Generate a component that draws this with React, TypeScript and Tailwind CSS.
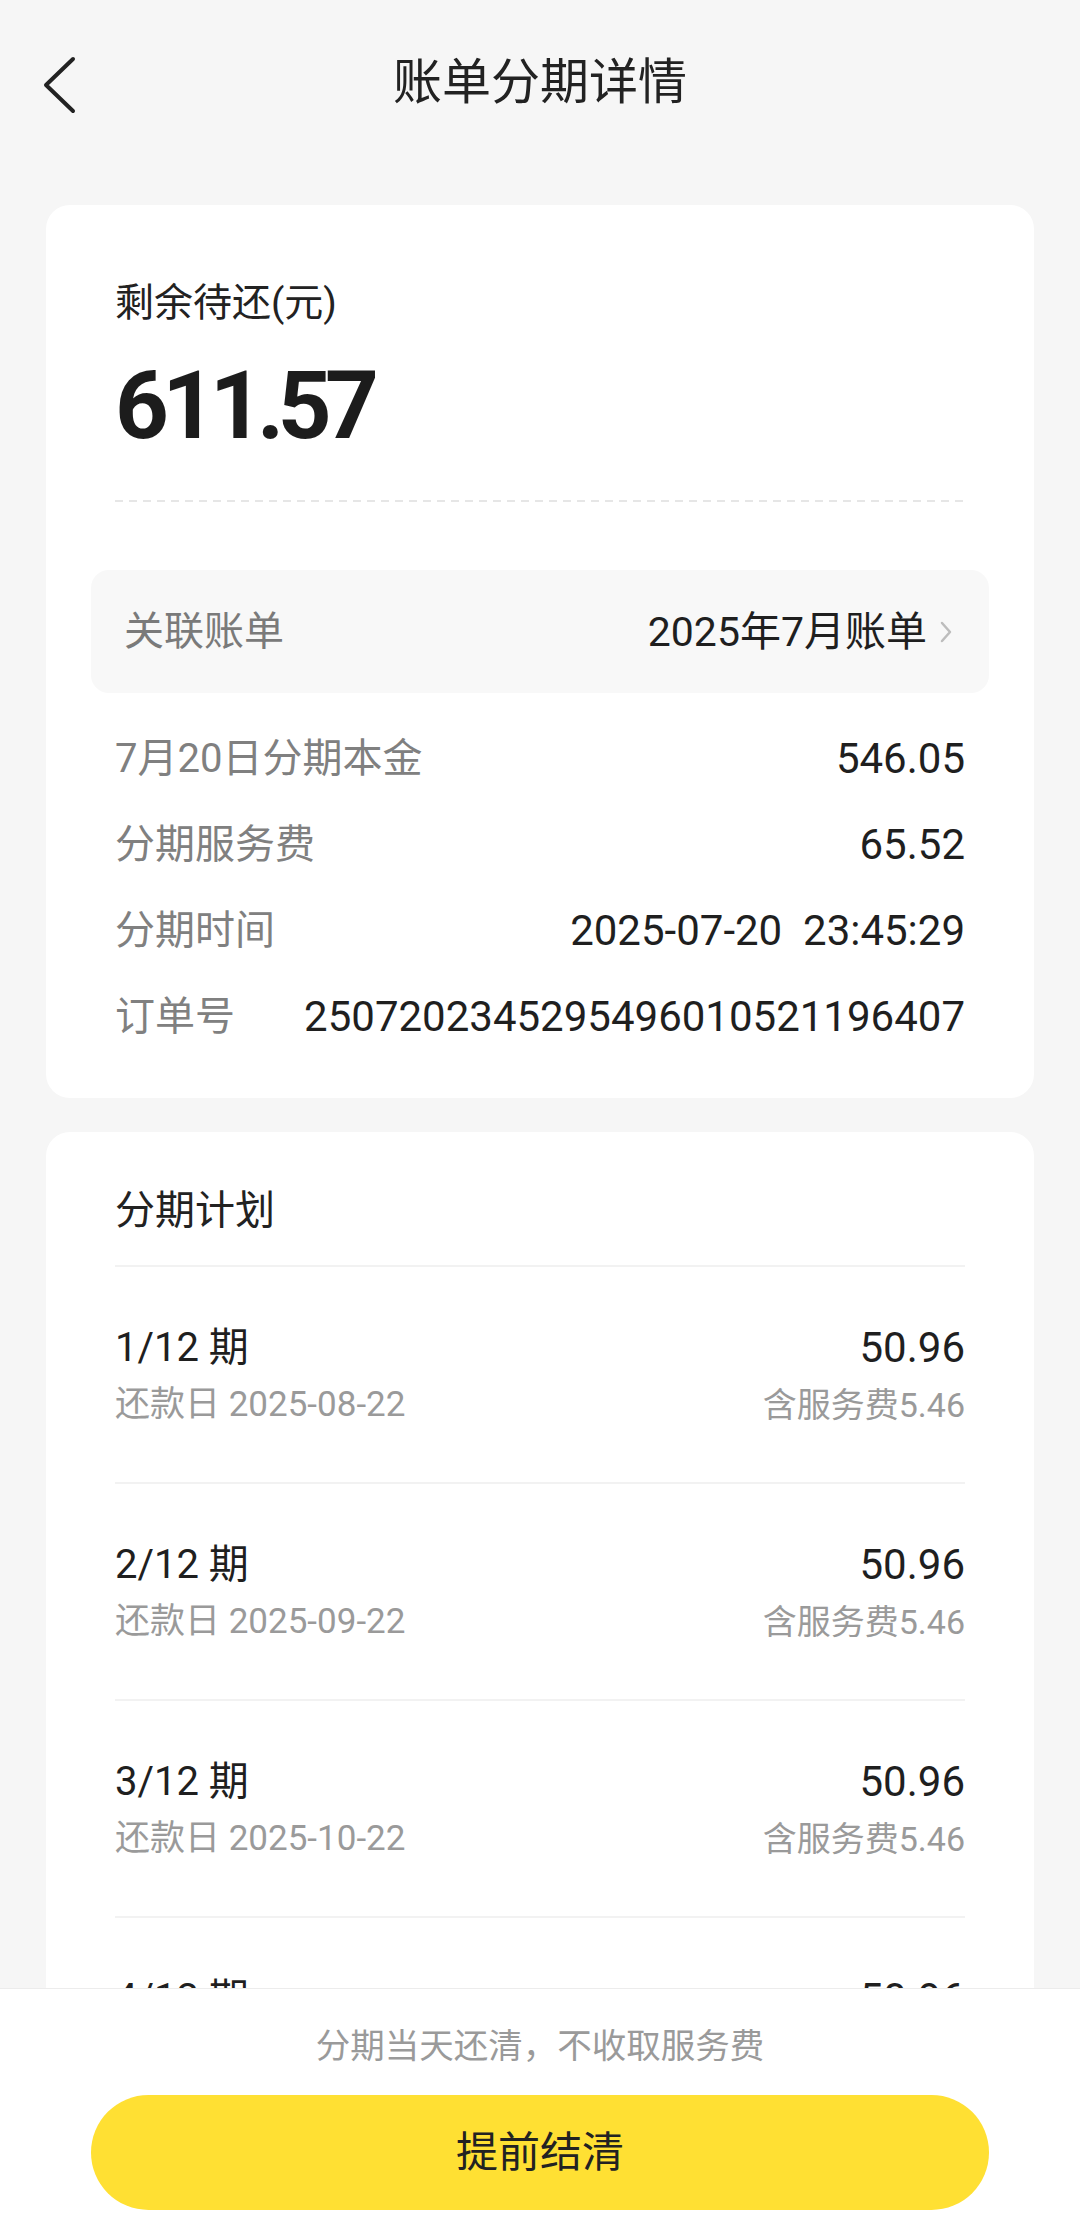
import React from "react";

const font = { fontFamily: 'Roboto, "Noto Sans CJK SC", sans-serif' };

const plans = [
  { n: 1, date: "2025-08-22" },
  { n: 2, date: "2025-09-22" },
  { n: 3, date: "2025-10-22" },
  { n: 4, date: "2025-11-22" },
];

function InfoRow({ label, value }: { label: string; value: string }) {
  return (
    <div className="flex h-[86px] items-center justify-between">
      <span className="text-[40px] leading-[56px] text-[#808080]">{label}</span>
      <span className="whitespace-pre text-[42px] leading-[56px] text-[#1f1f1f]">{value}</span>
    </div>
  );
}

export default function App() {
  return (
    <div
      className="relative h-[2230px] w-[1080px] overflow-hidden bg-[#f6f6f6]"
      style={font}
    >
      {/* header */}
      <div className="relative flex h-[166px] items-center justify-center">
        <div className="absolute left-[43px] top-[56px]">
          <svg width="34" height="58" viewBox="0 0 34 58">
            <polyline
              points="30,3 3,29 30,55"
              fill="none"
              stroke="#222"
              strokeWidth="4"
              strokeLinecap="round"
              strokeLinejoin="round"
            />
          </svg>
        </div>
        <span className="text-[49px] leading-[60px] text-[#222]">账单分期详情</span>
      </div>

      <div className="flex flex-col gap-[34px] px-[46px] pt-[39px]">
        {/* card 1 */}
        <div className="rounded-[24px] bg-white px-[69px] pb-[38px] pt-[70px]">
          <div className="text-[39px] leading-[56px] text-[#222]">剩余待还(元)</div>
          <div className="mt-[28px] text-[94px] font-bold leading-[94px] tracking-[-0.07em] text-[#1c1c1c]">
            611.57
          </div>
          <div className="mt-[47px] h-[2px] bg-[linear-gradient(to_right,#e6e6e6_55%,transparent_55%)] bg-[length:14px_2px]" />
          <div className="mx-[-24px] mt-[68px] flex h-[123px] items-center justify-between rounded-[18px] bg-[#f8f8f8] pl-[33px] pr-[36px]">
            <span className="text-[40px] leading-[56px] text-[#7a7a7a]">关联账单</span>
            <span className="flex items-center gap-[12px]">
              <span className="text-[41px] leading-[56px] text-[#1f1f1f]">2025年7月账单</span>
              <svg width="14" height="24" viewBox="0 0 14 24">
                <polyline
                  points="3,3 11,12 3,21"
                  fill="none"
                  stroke="#bdbdbd"
                  strokeWidth="2.5"
                  strokeLinecap="round"
                  strokeLinejoin="round"
                />
              </svg>
            </span>
          </div>
          <div className="mt-[23px] flex flex-col">
            <InfoRow label="7月20日分期本金" value="546.05" />
            <InfoRow label="分期服务费" value="65.52" />
            <InfoRow label="分期时间" value="2025-07-20  23:45:29" />
            <InfoRow label="订单号" value="2507202345295496010521196407" />
          </div>
        </div>

        {/* card 2 */}
        <div className="rounded-[24px] bg-white px-[69px] pt-[51px]">
          <div className="pb-[26px] text-[40px] leading-[56px] text-[#222]">分期计划</div>
          {plans.map((p) => (
            <div key={p.n}>
              <div className="h-[2px] bg-[#f2f2f2]" />
              <div className="flex items-start justify-between pb-[54px] pt-[56px]">
                <div className="flex flex-col gap-[9px]">
                  <span className="text-[40px] leading-[50px] text-[#1f1f1f]">{p.n}/12 期</span>
                  <span className="text-[35px] leading-[46px] text-[#9a9a9a]">还款日 {p.date}</span>
                </div>
                <div className="flex flex-col items-end gap-[9px]">
                  <span className="text-[42px] leading-[50px] text-[#1f1f1f]">50.96</span>
                  <span className="text-[34px] leading-[46px] text-[#9a9a9a]">含服务费5.46</span>
                </div>
              </div>
            </div>
          ))}
        </div>
      </div>

      {/* bottom bar */}
      <div className="absolute bottom-0 left-0 right-0 flex flex-col items-center border-t border-[#ececec] bg-white pb-[20px] pt-[33px]">
        <span className="text-[34.5px] leading-[48px] text-[#9a9a9a]">分期当天还清，不收取服务费</span>
        <div className="mt-[25px] flex h-[115px] w-[898px] items-center justify-center rounded-full bg-[#ffe033]">
          <span className="text-[42px] leading-[56px] text-[#222]">提前结清</span>
        </div>
      </div>
    </div>
  );
}
